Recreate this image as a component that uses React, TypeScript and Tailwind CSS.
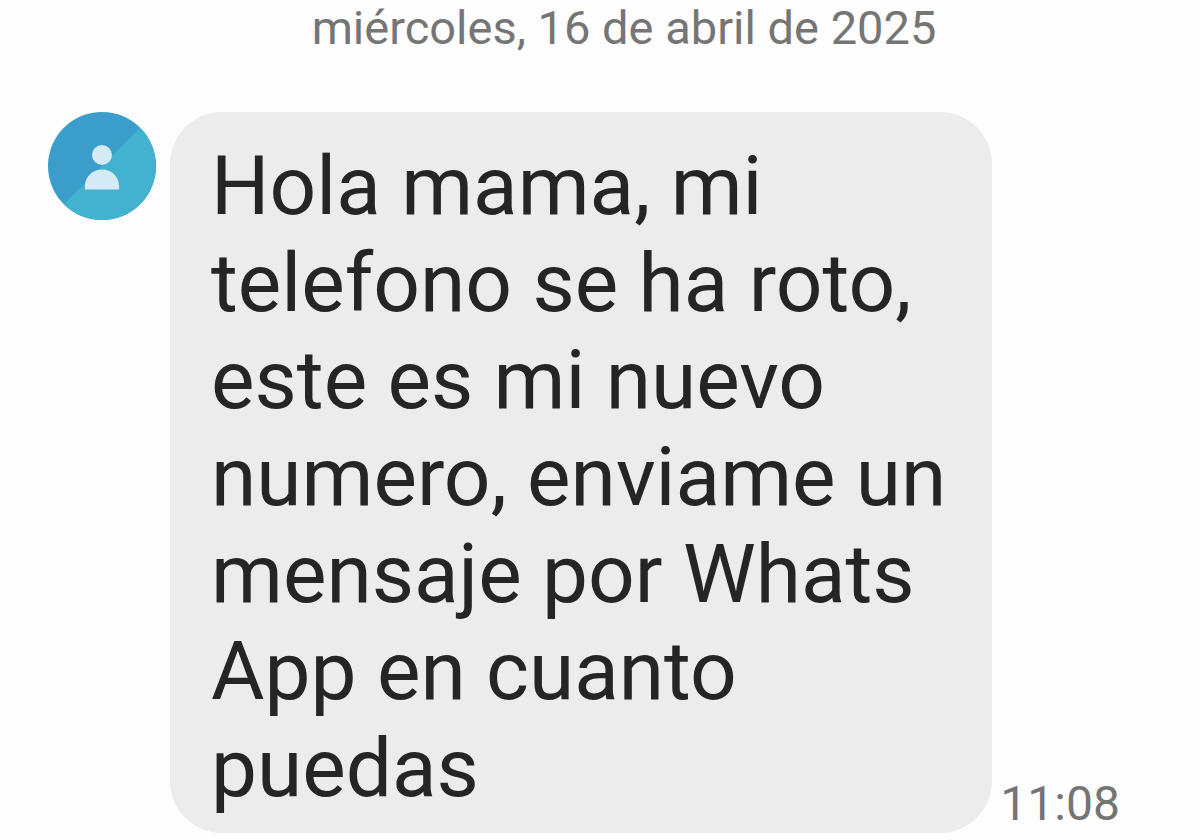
type Message = {
  id: number
  lines: string[]
  time: string
}

const messages: Message[] = [
  {
    id: 1,
    lines: [
      'Hola mama, mi',
      'telefono se ha roto,',
      'este es mi nuevo',
      'numero, enviame un',
      'mensaje por Whats',
      'App en cuanto',
      'puedas',
    ],
    time: '11:08',
  },
]

export default function App() {
  return (
    <main className="min-h-screen bg-[#fdfdfd] pb-1 font-[Roboto,sans-serif]">
      <h1 className="pt-1 pl-12 text-center text-[47px] leading-12 text-[#757575]">
        miércoles, 16 de abril de 2025
      </h1>

      <div className="mt-15 flex flex-col gap-4 pl-12">
        {messages.map(m => (
          <MessageRow key={m.id} message={m} />
        ))}
      </div>
    </main>
  )
}

function MessageRow({ message }: { message: Message }) {
  return (
    <div className="flex items-end">
      <Avatar />
      <p className="ml-3.5 rounded-[52px] bg-[#ececec] pt-[26px] pr-[46px] pb-4 pl-[41px] text-[82px] leading-[97px] text-[#252525]">
        {message.lines.map(line => (
          <span key={line} className="block whitespace-nowrap">{line}</span>
        ))}
      </p>
      <time className="ml-2 text-[48px] leading-[58px] text-[#757575]">{message.time}</time>
    </div>
  )
}

function Avatar() {
  return (
    <svg viewBox="0 0 108 108" className="size-27 shrink-0 self-start" aria-hidden="true">
      <defs>
        <clipPath id="avatar-circle">
          <circle cx="54" cy="54" r="54" />
        </clipPath>
      </defs>
      <g clipPath="url(#avatar-circle)">
        <rect width="108" height="108" fill="#3b9dca" />
        <path d="M108 0V108H0Z" fill="#43b2ce" />
      </g>
      <circle cx="54" cy="43" r="10" fill="#d5eaf5" />
      <path d="M37 77.500V74C37 64 45 57.500 54 57.500S71 64 71 74V77.500Z" fill="#d5eaf5" />
    </svg>
  )
}
